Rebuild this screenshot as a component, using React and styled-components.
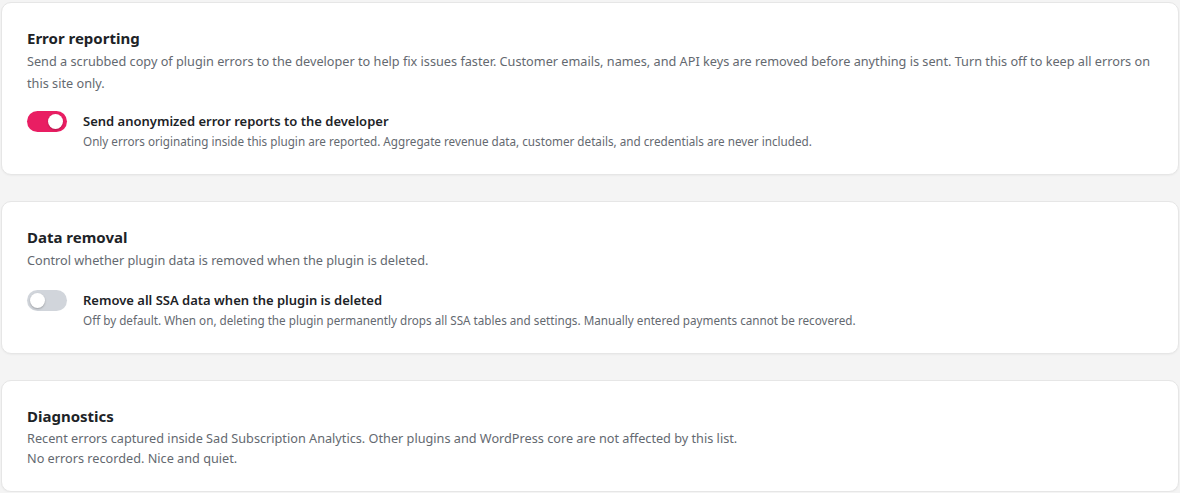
import React, { useState } from "react";
import styled, { createGlobalStyle } from "styled-components";

const Global = createGlobalStyle`
  html, body { margin: 0; padding: 0; background: #f4f4f4; }
  body {
    font-family: "Noto Sans", "Open Sans", "Liberation Sans", sans-serif;
    color: #1d2327;
    -webkit-font-smoothing: antialiased;
  }
`;

const Page = styled.div`
  display: flex;
  flex-direction: column;
  gap: 26px;
  padding: 2px 1px 0 1px;
`;

const Card = styled.section`
  background: #fff;
  border: 1px solid #e6e6e6;
  border-radius: 10px;
  box-shadow: 0 1px 2px rgba(0, 0, 0, 0.04);
  padding: 24px 25px 23px 25px;
`;

const Title = styled.h2`
  margin: 0 0 1px;
  font-size: 15px;
  font-weight: 700;
  line-height: 22px;
  color: #1d2327;
`;

const Desc = styled.p`
  margin: 0;
  font-size: 12.7px;
  line-height: 22px;
  color: #646970;
`;

const Log = styled.div`
  margin-top: 1px;
  font-size: 12.7px;
  line-height: 20px;
  color: #646970;
`;

const Row = styled.div`
  display: flex;
  align-items: flex-start;
  gap: 16px;
  margin-top: ${(p) => p.$space}px;
`;

const Track = styled.button`
  position: relative;
  flex: none;
  width: 40px;
  height: 21px;
  padding: 0;
  border: none;
  border-radius: 11px;
  cursor: pointer;
  background: ${(p) => (p.$on ? "#e91e63" : "#d1d5db")};
  transition: background 0.15s;
`;

const Knob = styled.span`
  position: absolute;
  top: 3px;
  left: ${(p) => (p.$on ? "21px" : "3px")};
  width: 15px;
  height: 15px;
  border-radius: 50%;
  background: #fff;
  box-shadow: 0 1px 2px rgba(0, 0, 0, 0.25);
  transition: left 0.15s;
`;

const LabelBlock = styled.div`
  display: flex;
  flex-direction: column;
`;

const Label = styled.span`
  font-size: 13px;
  font-weight: 600;
  line-height: 20px;
  color: #1d2327;
`;

const Help = styled.span`
  font-size: 11.7px;
  line-height: 20px;
  color: #646970;
`;

function Toggle({ initial, label, help, space = 17 }) {
  const [on, setOn] = useState(initial);
  return (
    <Row $space={space}>
      <Track $on={on} onClick={() => setOn(!on)} aria-pressed={on}>
        <Knob $on={on} />
      </Track>
      <LabelBlock>
        <Label>{label}</Label>
        <Help>{help}</Help>
      </LabelBlock>
    </Row>
  );
}

export default function App() {
  return (
    <>
      <Global />
      <Page>
        <Card>
          <Title>Error reporting</Title>
          <Desc>
            Send a scrubbed copy of plugin errors to the developer to help fix issues faster. Customer emails, names, and API keys are removed before anything is sent. Turn this off to keep all errors on this site only.
          </Desc>
          <Toggle
            initial={true}
            label="Send anonymized error reports to the developer"
            help="Only errors originating inside this plugin are reported. Aggregate revenue data, customer details, and credentials are never included."
          />
        </Card>
        <Card>
          <Title>Data removal</Title>
          <Desc>Control whether plugin data is removed when the plugin is deleted.</Desc>
          <Toggle
            initial={false}
            space={19}
            label="Remove all SSA data when the plugin is deleted"
            help="Off by default. When on, deleting the plugin permanently drops all SSA tables and settings. Manually entered payments cannot be recovered."
          />
        </Card>
        <Card>
          <Title>Diagnostics</Title>
          <Log>
            <div>Recent errors captured inside Sad Subscription Analytics. Other plugins and WordPress core are not affected by this list.</div>
            <div>No errors recorded. Nice and quiet.</div>
          </Log>
        </Card>
      </Page>
    </>
  );
}
